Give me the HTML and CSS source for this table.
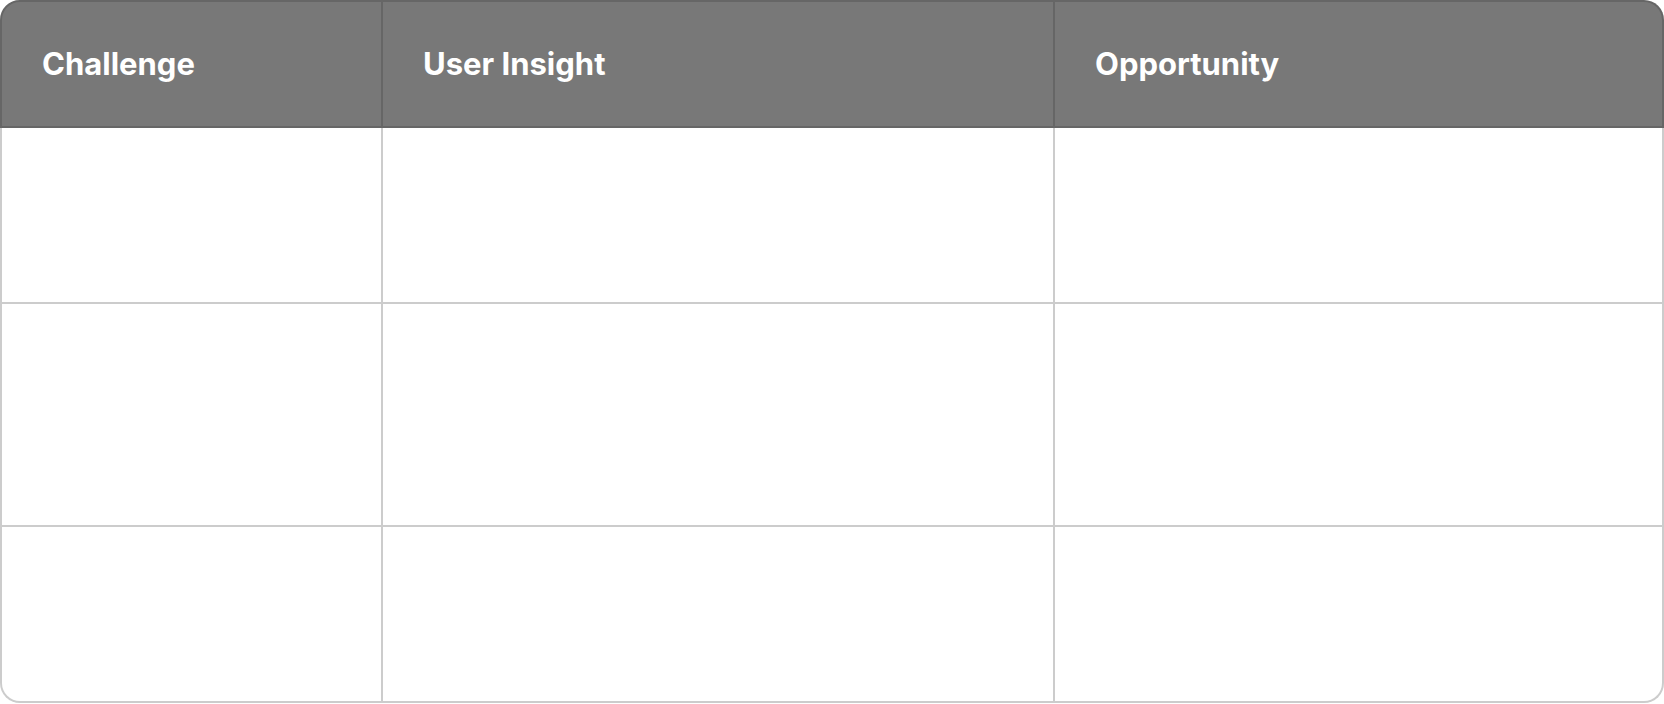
FILE: index.html
```html
<!DOCTYPE html>
<html lang="en">
<head>
<meta charset="utf-8">
<title>Research Synthesis</title>
<link rel="stylesheet" href="styles.css">
</head>
<body>
<table class="synth">
  <colgroup>
    <col class="c1">
    <col class="c2">
    <col class="c3">
  </colgroup>
  <thead>
    <tr>
      <th>Challenge</th>
      <th>User Insight</th>
      <th>Opportunity</th>
    </tr>
  </thead>
  <tbody>
    <tr>
      <td>Drop-off at checkout</td>
      <td>Users felt overwhelmed by the number of steps and form fields.</td>
      <td>Streamline checkout into a single page with saved details.</td>
    </tr>
    <tr>
      <td>Low trust in product reviews and seller ratings</td>
      <td>Shoppers want to see reviews from people with similar needs.</td>
      <td>Add filters and verified badges to reviews to build trust.</td>
    </tr>
    <tr>
      <td>Confusing navigation</td>
      <td>Categories did not match the way users think about products.</td>
      <td>Restructure menus using card sorting results.</td>
    </tr>
  </tbody>
</table>
</body>
</html>
```
FILE: styles.css
```css
* { box-sizing: border-box; }

html, body {
  margin: 0;
  padding: 0;
  background: #ffffff;
}

body {
  font-family: Inter, "Noto Sans", "Liberation Sans", sans-serif;
}

.synth {
  width: 1664px;
  table-layout: fixed;
  border-collapse: separate;
  border-spacing: 0;
}

.c1 { width: 383px; }
.c2 { width: 672px; }
.c3 { width: 609px; }

.synth th {
  background: #787878;
  color: #ffffff;
  font-weight: 700;
  font-size: 31px;
  line-height: 44px;
  text-align: left;
  padding: 40px 40px;
  border-top: 2px solid #666666;
  border-right: 2px solid #666666;
  border-bottom: 2px solid #666666;
}

.synth th:first-child {
  border-left: 2px solid #666666;
  border-top-left-radius: 20px;
}

.synth th:last-child {
  border-top-right-radius: 20px;
}

.synth td {
  color: #ffffff;
  font-size: 26px;
  line-height: 47px;
  vertical-align: top;
  padding: 40px 40px 40px;
  border-right: 2px solid #cccccc;
  border-bottom: 2px solid #cccccc;
}

.synth td:first-child {
  border-left: 2px solid #cccccc;
}

.synth tbody tr:last-child td:first-child {
  border-bottom-left-radius: 20px;
}

.synth tbody tr:last-child td:last-child {
  border-bottom-right-radius: 20px;
}
```
